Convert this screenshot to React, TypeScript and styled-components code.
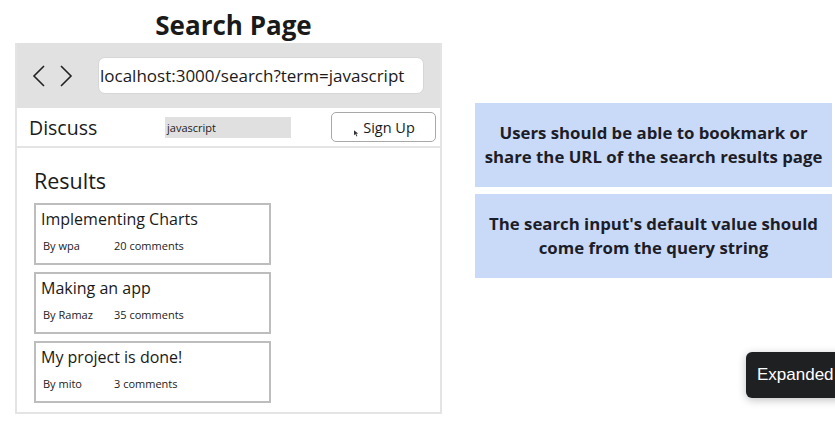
import styled, { createGlobalStyle } from "styled-components";

const GlobalStyle = createGlobalStyle`
  html, body {
    margin: 0;
    padding: 0;
    background: #ffffff;
  }
  body {
    font-family: "Open Sans", "Noto Sans", sans-serif;
    color: #1e1e1e;
  }
`;

const Page = styled.div`
  position: relative;
  width: 835px;
  height: 440px;
  overflow: hidden;
  display: flex;
  align-items: flex-start;
  gap: 33px;
  padding-left: 15px;
  box-sizing: border-box;
`;

const MockColumn = styled.div`
  width: 427px;
  display: flex;
  flex-direction: column;
`;

const PageTitle = styled.h1`
  margin: 0;
  height: 43px;
  line-height: 50px;
  font-size: 26px;
  font-weight: 700;
  text-align: center;
  padding-left: 10px;
  color: #1a1a1a;
`;

const Browser = styled.div`
  height: 371px;
  border: 2px solid #e4e4e4;
  border-top: none;
  box-sizing: border-box;
  display: flex;
  flex-direction: column;
`;

const Toolbar = styled.div`
  height: 65px;
  background: #e1e1e1;
  display: flex;
  align-items: center;
  padding: 0 16px 0 15px;
`;

const Arrows = styled.div`
  display: flex;
  align-items: center;
  gap: 13px;
  width: 66px;
`;

const UrlBar = styled.div`
  flex: 1;
  height: 37px;
  background: #ffffff;
  border: 1px solid #d6d6d6;
  border-radius: 7px;
  box-sizing: border-box;
  display: flex;
  align-items: center;
  padding-left: 1px;
  font-size: 17px;
  color: #1a1a1a;
`;

const NavBar = styled.div`
  height: 38px;
  border-bottom: 2px solid #e4e4e4;
  display: flex;
  align-items: center;
  padding: 0 4px 0 12px;
`;

const Brand = styled.div`
  font-size: 19.5px;
  width: 136px;
  color: #1a1a1a;
`;

const SearchInput = styled.div`
  width: 126px;
  height: 21px;
  background: #e0e0e0;
  font-size: 11px;
  line-height: 21px;
  padding-left: 2px;
  box-sizing: border-box;
  color: #222;
`;

const SignUp = styled.button`
  margin-left: auto;
  width: 105px;
  height: 30px;
  border: 1.5px solid #a8a8a8;
  border-radius: 5px;
  background: #ffffff;
  font-family: "Open Sans", "Noto Sans", sans-serif;
  font-size: 14.5px;
  color: #1a1a1a;
  display: flex;
  align-items: center;
  justify-content: center;
  gap: 4px;
  padding: 0 0 0 2px;
`;

const Content = styled.div`
  padding: 18px 17px 0;
  display: flex;
  flex-direction: column;
`;

const ResultsHeading = styled.div`
  font-size: 21.5px;
  line-height: 30px;
  margin-bottom: 7px;
  color: #1a1a1a;
`;

const ResultList = styled.div`
  display: flex;
  flex-direction: column;
  gap: 7px;
`;

const ResultCard = styled.div`
  width: 237px;
  height: 62px;
  border: 2px solid #bdbdbd;
  box-sizing: border-box;
  padding: 3px 5px 0;
`;

const CardTitle = styled.div`
  font-size: 16px;
  line-height: 22px;
  color: #1a1a1a;
`;

const CardMeta = styled.div`
  display: flex;
  margin-top: 8px;
  padding-left: 2px;
  font-size: 11px;
  color: #222;
`;

const Author = styled.span`
  width: 71px;
`;

const NotesColumn = styled.div`
  margin-top: 103px;
  width: 357px;
  display: flex;
  flex-direction: column;
  gap: 7px;
`;

const Note = styled.div`
  height: 84px;
  background: #c9daf8;
  display: flex;
  align-items: center;
  justify-content: center;
  text-align: center;
  font-size: 16.8px;
  font-weight: 700;
  line-height: 24px;
  color: #1c1d28;
  padding: 0 4px;
`;

const Tooltip = styled.div`
  position: absolute;
  left: 746px;
  top: 352px;
  height: 46px;
  padding: 0 14px 0 11px;
  background: #1f2022;
  border-radius: 6px;
  box-shadow: 0 2px 8px rgba(0, 0, 0, 0.25);
  color: #ffffff;
  font-family: "Liberation Sans", Arial, sans-serif;
  font-size: 17px;
  display: flex;
  align-items: center;
  white-space: nowrap;
`;

function Chevron({ dir }: { dir: "left" | "right" }) {
  const d = dir === "left" ? "M12 1 L2 11 L12 21" : "M2 1 L12 11 L2 21";
  return (
    <svg width="14" height="22" viewBox="0 0 14 22">
      <path d={d} fill="none" stroke="#222" strokeWidth="1.6" />
    </svg>
  );
}

function Cursor() {
  return (
    <svg width="5" height="7" viewBox="0 0 6 8" style={{ marginTop: 12 }}>
      <path d="M0 0 L0 6 L1.6 4.6 L3 7.5 L4 7 L2.7 4.2 L5 4 Z" fill="#333" />
    </svg>
  );
}

const results = [
  { title: "Implementing Charts", author: "wpa", comments: 20 },
  { title: "Making an app", author: "Ramaz", comments: 35 },
  { title: "My project is done!", author: "mito", comments: 3 },
];

export default function App() {
  return (
    <>
      <GlobalStyle />
      <Page>
        <MockColumn>
          <PageTitle>Search Page</PageTitle>
          <Browser>
            <Toolbar>
              <Arrows>
                <Chevron dir="left" />
                <Chevron dir="right" />
              </Arrows>
              <UrlBar>localhost:3000/search?term=javascript</UrlBar>
            </Toolbar>
            <NavBar>
              <Brand>Discuss</Brand>
              <SearchInput>javascript</SearchInput>
              <SignUp>
                <Cursor />
                Sign Up
              </SignUp>
            </NavBar>
            <Content>
              <ResultsHeading>Results</ResultsHeading>
              <ResultList>
                {results.map((r) => (
                  <ResultCard key={r.title}>
                    <CardTitle>{r.title}</CardTitle>
                    <CardMeta>
                      <Author>By {r.author}</Author>
                      <span>{r.comments} comments</span>
                    </CardMeta>
                  </ResultCard>
                ))}
              </ResultList>
            </Content>
          </Browser>
        </MockColumn>
        <NotesColumn>
          <Note>
            Users should be able to bookmark or
            <br />
            share the URL of the search results page
          </Note>
          <Note>
            The search input's default value should
            <br />
            come from the query string
          </Note>
        </NotesColumn>
        <Tooltip>Expanded</Tooltip>
      </Page>
    </>
  );
}
